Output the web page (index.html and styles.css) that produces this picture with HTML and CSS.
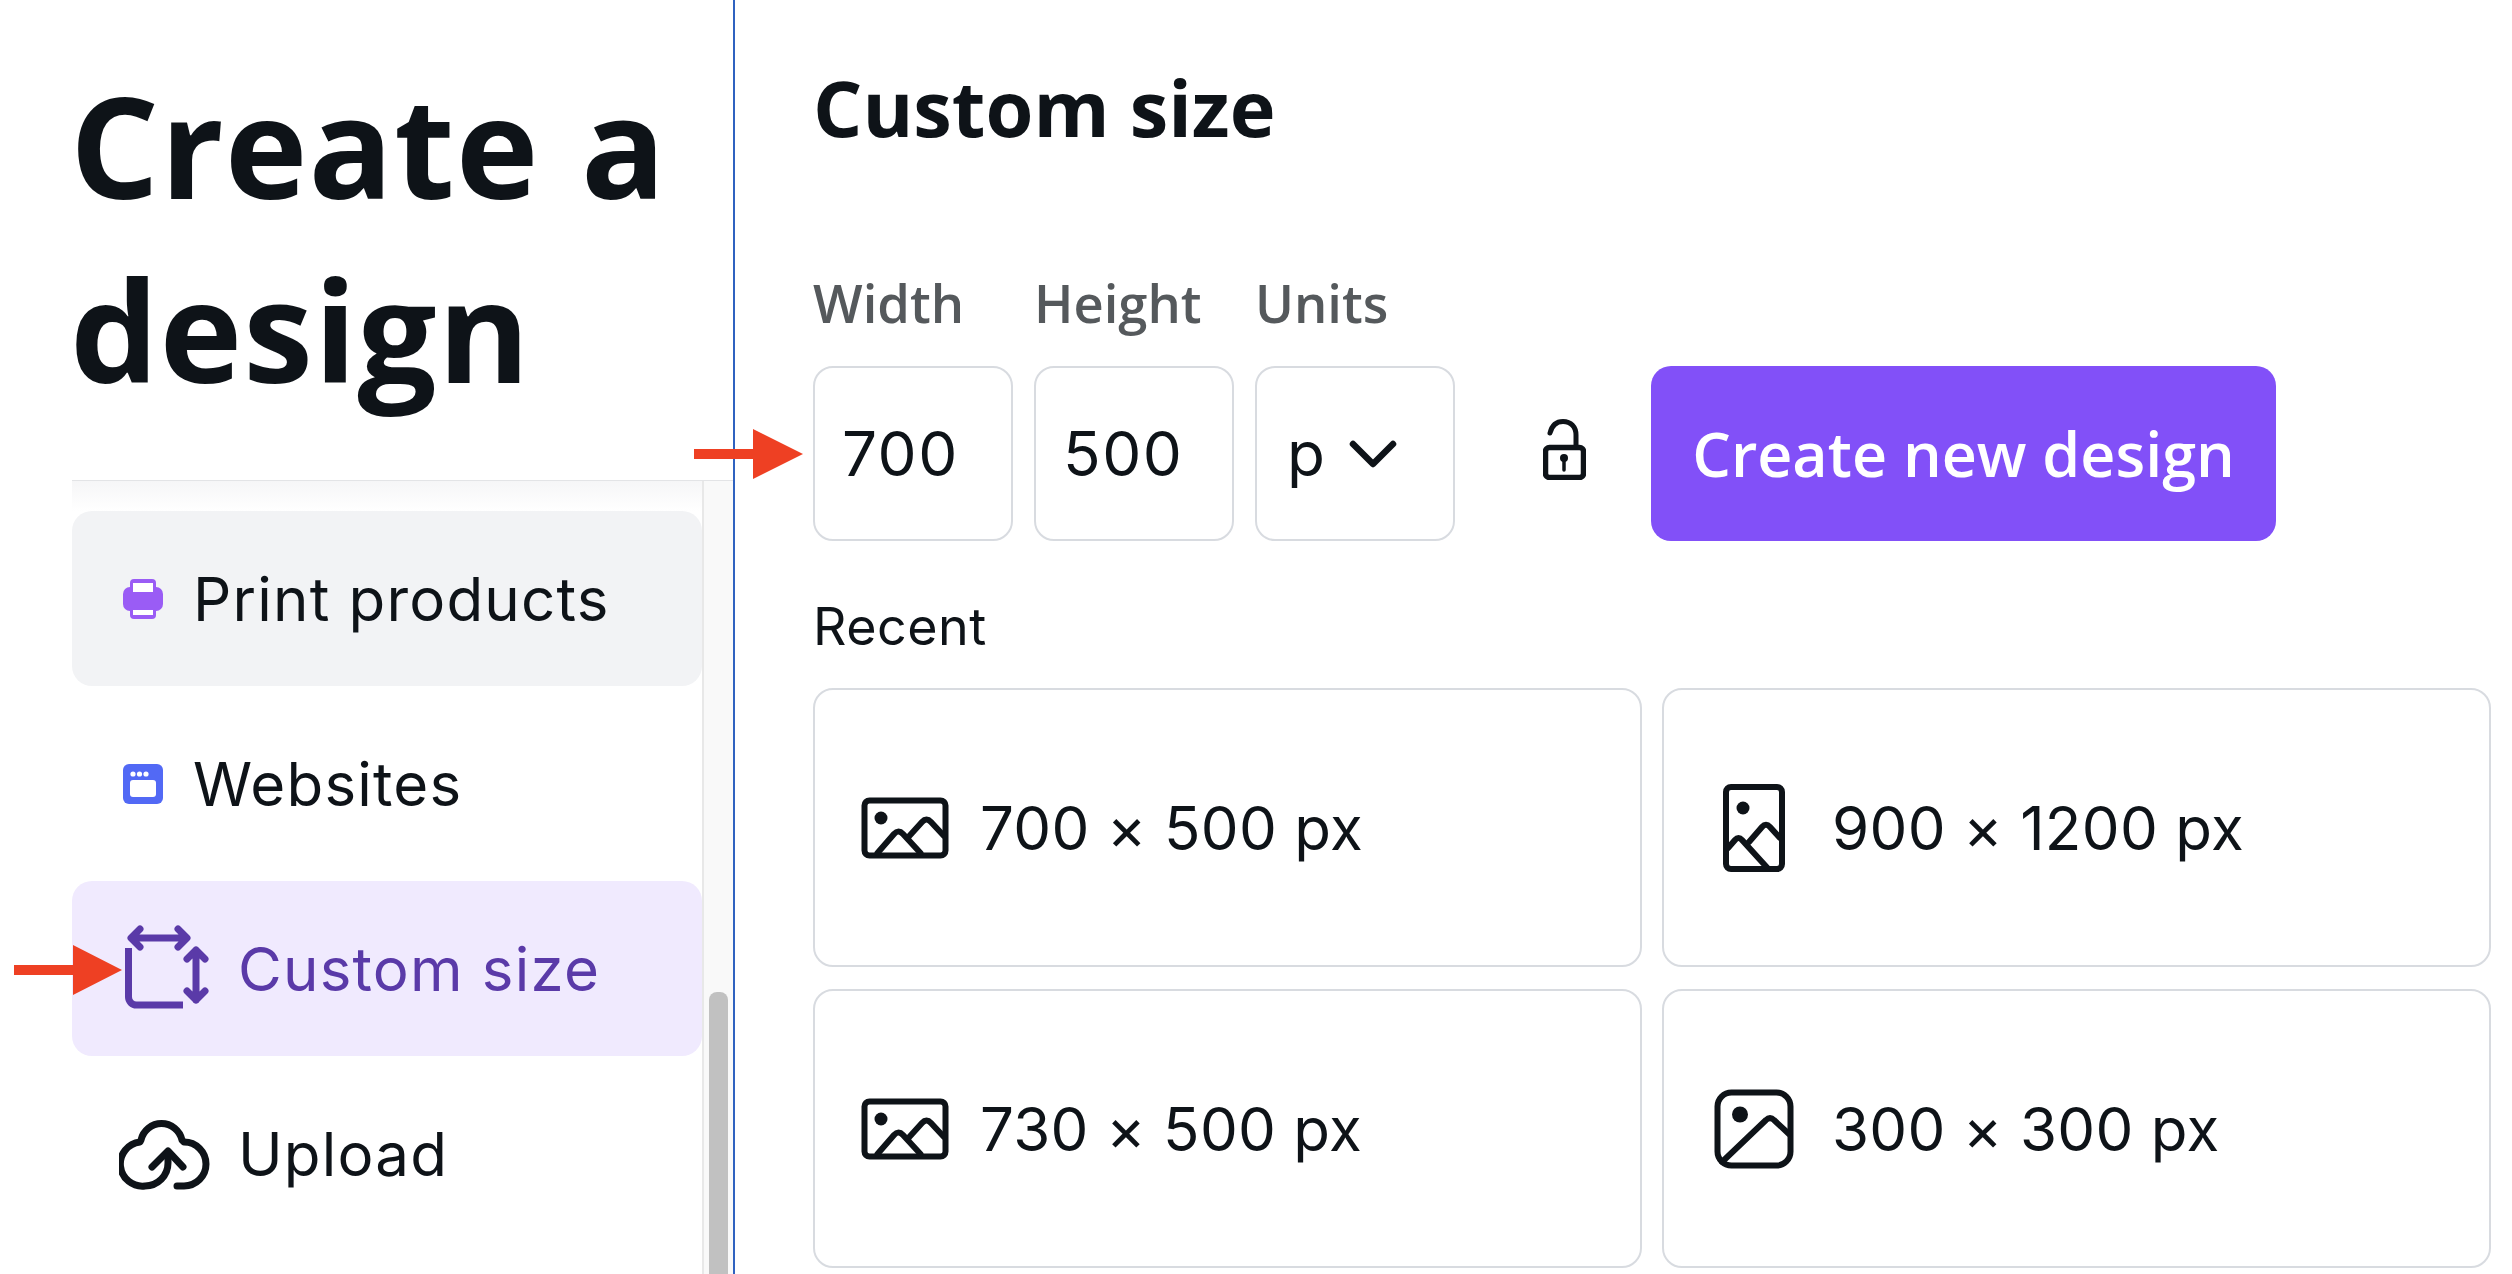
FILE: index.html
```html
<!DOCTYPE html>
<html>
<head>
    <title>Create a design</title>
    <link rel="stylesheet" href="styles.css">
</head>
<body>
    <div class="page">
        <aside class="sidebar">
            <h1>Create a<br>design</h1>
            <div class="nav-wrap">
                <nav class="nav-list">
                    <a class="nav-item hover">
                        <span class="nav-icon small">
                            <svg width="40" height="40" viewBox="0 0 40 40">
                                <path d="M7 13V4a4 4 0 0 1 4-4h18a4 4 0 0 1 4 4v9z" fill="#9a5cf5"/>
                                <path d="M7 25v11a4 4 0 0 0 4 4h18a4 4 0 0 0 4-4V25z" fill="#9a5cf5"/>
                                <rect y="8" width="40" height="24" rx="7" fill="#9a5cf5"/>
                                <rect x="10" y="4" width="20" height="9" fill="#fff"/>
                                <rect x="10" y="31" width="20" height="5" fill="#fff"/>
                            </svg>
                        </span>
                        Print products
                    </a>
                    <a class="nav-item">
                        <span class="nav-icon small">
                            <svg width="40" height="40" viewBox="0 0 40 40">
                                <rect width="40" height="40" rx="6" fill="#5269f5"/>
                                <circle cx="10" cy="10" r="2.6" fill="#fff"/>
                                <circle cx="16.5" cy="10" r="2.6" fill="#fff"/>
                                <circle cx="23" cy="10" r="2.6" fill="#fff"/>
                                <rect x="7" y="16" width="26" height="17" rx="3" fill="#fff"/>
                            </svg>
                        </span>
                        Websites
                    </a>
                    <a class="nav-item active">
                        <span class="nav-icon">
                            <svg width="96" height="90" viewBox="0 0 96 90" fill="none" stroke="#5a3aa8" stroke-width="7" stroke-linecap="round" stroke-linejoin="round">
                                <path d="M14 14H66M21 5l-9 9 9 9M59 5l9 9-9 9"/>
                                <path d="M77 26V76M68 35l9-9 9 9M68 67l9 9 9-9"/>
                                <path d="M9.5 24V73a8 8 0 0 0 8 8H64" stroke-linecap="butt"/>
                            </svg>
                        </span>
                        Custom size
                    </a>
                    <a class="nav-item">
                        <span class="nav-icon">
                            <svg width="96" height="90" viewBox="19 228 96 90" fill="none" stroke="#0e1318" stroke-width="7" stroke-linecap="round" stroke-linejoin="round">
                                <path d="M77 305H84A22 22 0 0 0 84 261L82 259A21 21 0 0 0 41 259L40 261A22 22 0 0 0 45 305A23 23 0 0 0 68 282V272"/>
                                <path d="M52 286L68 270L83 286"/>
                            </svg>
                        </span>
                        Upload
                    </a>
                </nav>
                <div class="scroll-track"><div class="scroll-thumb"></div></div>
            </div>
        </aside>
        <main class="main">
            <h2>Custom size</h2>
            <div class="size-form">
                <div class="field">
                    <label>Width</label>
                    <div class="box">700</div>
                </div>
                <div class="field">
                    <label>Height</label>
                    <div class="box">500</div>
                </div>
                <div class="field">
                    <label>Units</label>
                    <div class="box unit-box">
                        p
                        <svg width="48" height="28" viewBox="0 0 48 28" fill="none" stroke="#0e1318" stroke-width="6.5" stroke-linecap="round" stroke-linejoin="round"><path d="M4 4L24 24L44 4"/></svg>
                    </div>
                </div>
                <svg class="lock" width="43" height="61" viewBox="0 0 43 61" fill="none" stroke="#0e1318">
                    <path d="M7 14C9 6 13 2.5 20 2.5C28 2.5 33 8 33 16V27" stroke-width="5" stroke-linecap="round"/>
                    <rect x="2.5" y="28.5" width="38" height="30" rx="4" stroke-width="5.5"/>
                    <circle cx="21" cy="39" r="4" fill="#0e1318" stroke="none"/>
                    <path d="M21 40V51" stroke-width="3.5" stroke-linecap="round"/>
                </svg>
                <button class="create-btn" type="button">Create new design</button>
            </div>
            <p class="recent-label">Recent</p>
            <div class="recent-grid">
                <div class="recent-card">
                    <span class="card-icon">
                        <svg width="96" height="96" viewBox="0 0 96 96" fill="none" stroke="#0e1318" stroke-width="6" stroke-linecap="round" stroke-linejoin="round">
                            <rect x="7.5" y="20.5" width="81" height="55" rx="5"/>
                            <circle cx="24" cy="38" r="6.5" fill="#0e1318" stroke="none"/>
                            <path d="M20.5 73L37 54q4.5-5 9 0L63.5 73M50.5 58L65 42q4.5-5 9 0L87 56"/>
                        </svg>
                    </span>
                    700 × 500 px
                </div>
                <div class="recent-card">
                    <span class="card-icon">
                        <svg width="96" height="96" viewBox="0 0 96 96" fill="none" stroke="#0e1318" stroke-width="6" stroke-linecap="round" stroke-linejoin="round">
                            <rect x="20" y="7" width="56" height="82" rx="5"/>
                            <circle cx="37" cy="28" r="6.5" fill="#0e1318" stroke="none"/>
                            <path d="M22 68L29 60q3.5-4 7 0L61.5 88M43 62L56 47q4-4.5 8 0L74 58"/>
                        </svg>
                    </span>
                    900 × 1200 px
                </div>
                <div class="recent-card">
                    <span class="card-icon">
                        <svg width="96" height="96" viewBox="0 0 96 96" fill="none" stroke="#0e1318" stroke-width="6" stroke-linecap="round" stroke-linejoin="round">
                            <rect x="7.5" y="20.5" width="81" height="55" rx="5"/>
                            <circle cx="24" cy="38" r="6.5" fill="#0e1318" stroke="none"/>
                            <path d="M20.5 73L37 54q4.5-5 9 0L63.5 73M50.5 58L65 42q4.5-5 9 0L87 56"/>
                        </svg>
                    </span>
                    730 × 500 px
                </div>
                <div class="recent-card">
                    <span class="card-icon">
                        <svg width="96" height="96" viewBox="0 0 96 96" fill="none" stroke="#0e1318" stroke-width="6" stroke-linecap="round" stroke-linejoin="round">
                            <rect x="11.5" y="11.5" width="73" height="73" rx="14"/>
                            <circle cx="34" cy="33.5" r="8" fill="#0e1318" stroke="none"/>
                            <path d="M16 81L60 39q4-4 8 0L83 53"/>
                        </svg>
                    </span>
                    300 × 300 px
                </div>
            </div>
        </main>
        <svg class="arrow arrow-nav" width="108" height="50" viewBox="0 0 108 50"><path d="M0 20H59V0L108 25L59 50V30H0z" fill="#ee4023"/></svg>
        <svg class="arrow arrow-input" width="109" height="50" viewBox="0 0 109 50"><path d="M0 20H59V0L109 25L59 50V30H0z" fill="#ee4023"/></svg>
    </div>
</body>
</html>
```

FILE: styles.css
```css
html, body {
    margin: 0;
    height: 100%;
    background-color: #fff;
}
body {
    font-family: Inter, sans-serif;
    color: #0e1318;
    overflow: hidden;
}
.page {
    position: relative;
    display: flex;
    height: 1274px;
    overflow: hidden;
}
.sidebar {
    display: flex;
    flex-direction: column;
    box-sizing: border-box;
    flex: 0 0 735px;
    border-right: 2px solid #2f62c0;
}
h1 {
    margin: 0;
    padding: 53px 0 60px 70px;
    font-family: "Open Sans", sans-serif;
    font-size: 140px;
    font-weight: 700;
    line-height: 184px;
    letter-spacing: 1px;
    word-spacing: 4px;
}
.nav-wrap {
    display: flex;
    flex: 1;
    margin-left: 72px;
    min-height: 0;
    box-shadow: 0 -1px 0 #e3e4e6;
    background: linear-gradient(#f6f6f7, #fff 30px);
}
.nav-list {
    display: flex;
    flex-direction: column;
    gap: 10px;
    flex: 0 0 630px;
    padding-top: 30px;
}
.nav-item {
    display: flex;
    align-items: center;
    flex: 0 0 175px;
    box-sizing: border-box;
    padding-left: 47px;
    gap: 23px;
    border-radius: 20px;
    font-size: 60px;
    letter-spacing: 1.2px;
}
.nav-item.hover {
    background-color: #f2f3f5;
}
.nav-item.active {
    background-color: #f0eafe;
    color: #5a3aa8;
}
.nav-icon {
    display: flex;
    align-items: center;
    flex: 0 0 96px;
}
.nav-icon.small {
    flex-basis: 51px;
    padding-left: 4px;
    box-sizing: border-box;
}
.scroll-track {
    flex: 1;
    border-left: 2px solid #e8e8e8;
    background-color: #f9f9f9;
    padding: 511px 5px 0 5px;
}
.scroll-thumb {
    height: 400px;
    border-radius: 8px;
    background-color: #c1c1c1;
}
.main {
    flex: 1;
    padding: 0 21px 0 78px;
}
h2 {
    margin: 0;
    padding-top: 62px;
    font-family: "Open Sans", sans-serif;
    font-size: 77.5px;
    font-weight: 700;
    line-height: 90px;
}
.size-form {
    display: flex;
    align-items: flex-end;
    margin-top: 120px;
}
.field {
    display: flex;
    flex-direction: column;
    gap: 32px;
    width: 200px;
    margin-right: 21px;
}
label {
    font-family: "Open Sans", sans-serif;
    font-size: 52.5px;
    font-weight: 600;
    line-height: 62px;
    color: #55595c;
}
.box {
    display: flex;
    align-items: center;
    box-sizing: border-box;
    height: 175px;
    padding-left: 27px;
    border: 2px solid #d8dbe0;
    border-radius: 20px;
    font-size: 62px;
    letter-spacing: 1.5px;
}
.unit-box {
    justify-content: space-between;
    padding-left: 30px;
    padding-right: 56px;
}
.lock {
    align-self: flex-end;
    margin: 0 65px 61px 67px;
}
.create-btn {
    width: 625px;
    height: 175px;
    padding: 0;
    border: none;
    border-radius: 20px;
    background-color: #8250f8;
    color: #fff;
    font-family: "Open Sans", sans-serif;
    font-size: 61px;
    font-weight: 600;
}
.recent-label {
    margin: 0;
    padding: 41px 0 16px;
    font-size: 52px;
    letter-spacing: 0.5px;
    line-height: 90px;
}
.recent-grid {
    display: grid;
    grid-template-columns: 829px 829px;
    grid-auto-rows: 279px;
    gap: 22px 20px;
}
.recent-card {
    display: flex;
    align-items: center;
    box-sizing: border-box;
    padding-left: 42px;
    gap: 30px;
    border: 2px solid #d8dbe0;
    border-radius: 20px;
    font-size: 60px;
    letter-spacing: 0.3px;
}
.recent-card:nth-child(odd) {
    gap: 27px;
}
.card-icon {
    display: flex;
    flex: 0 0 96px;
}
.arrow {
    position: absolute;
}
.arrow-nav {
    left: 14px;
    top: 945px;
}
.arrow-input {
    left: 694px;
    top: 429px;
}
```
